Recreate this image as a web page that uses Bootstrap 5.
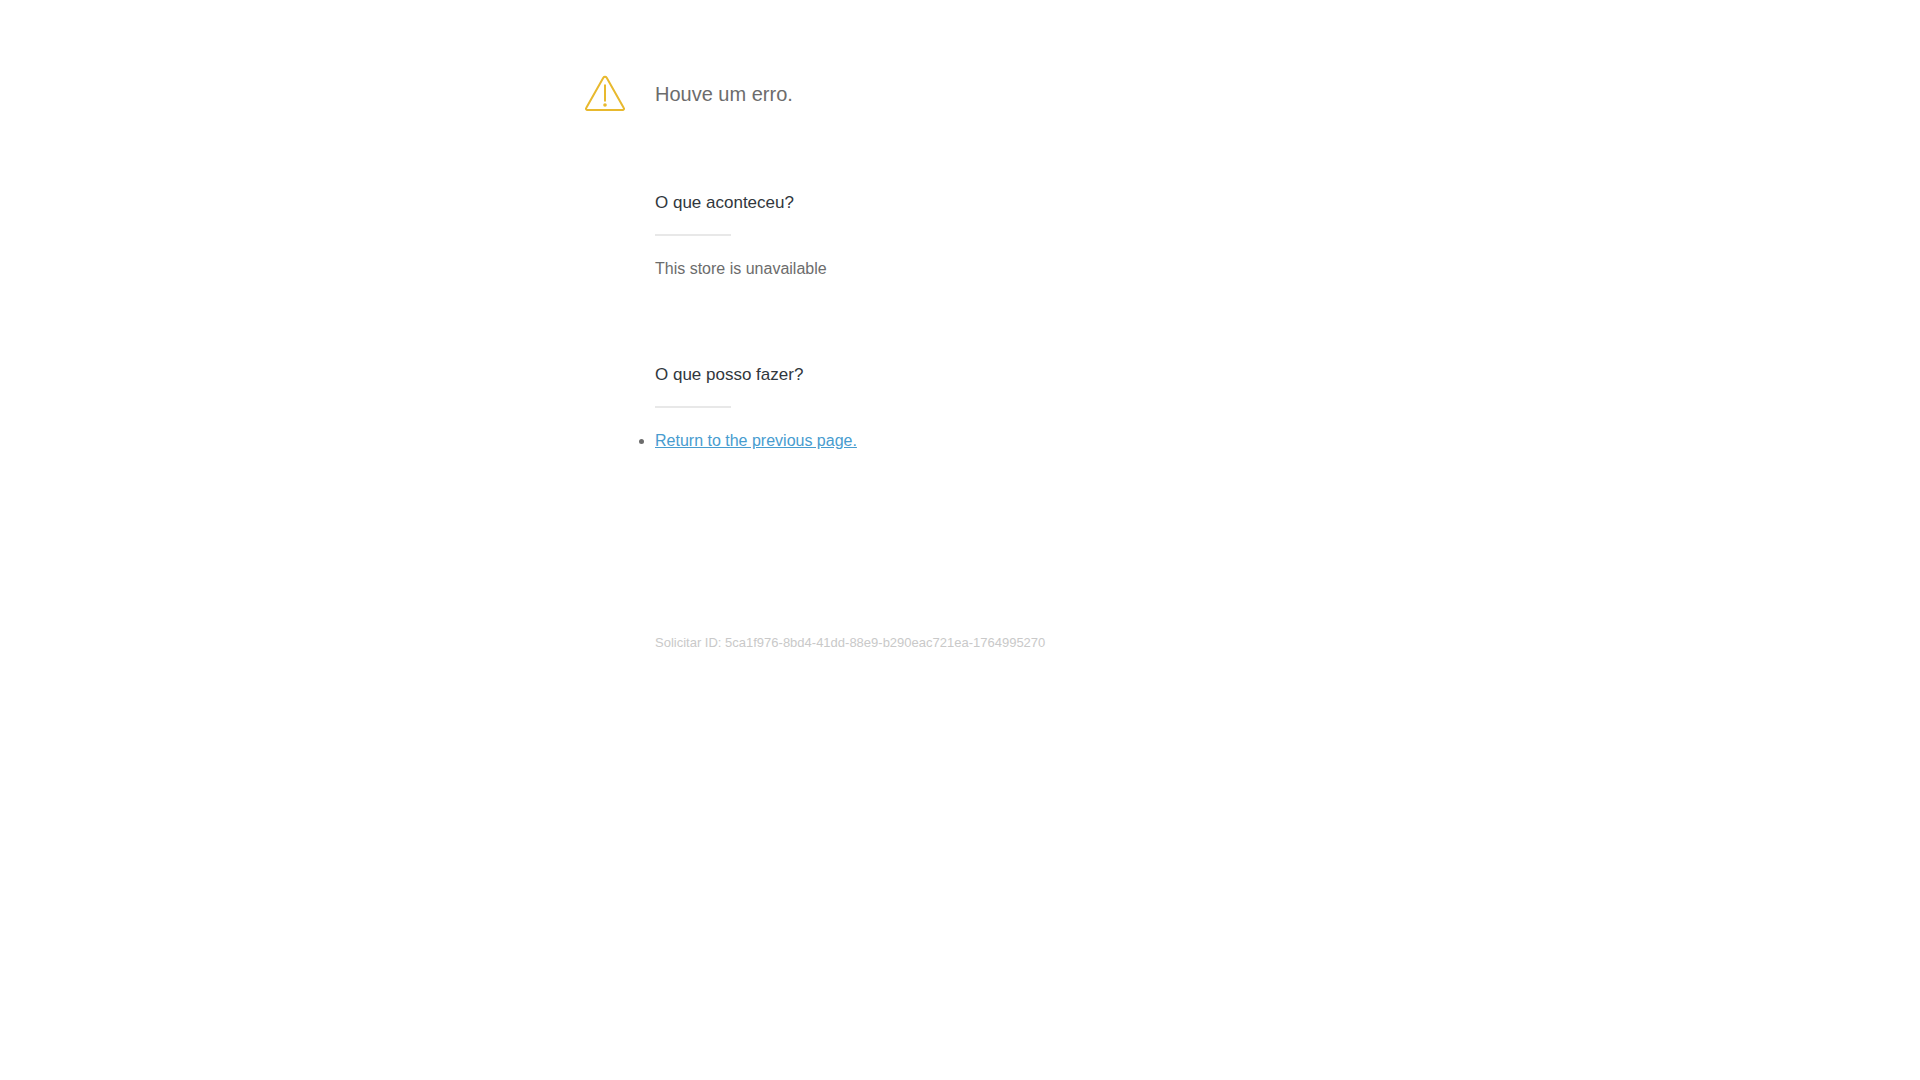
<!DOCTYPE html>
<html lang="pt">
<head>
<meta charset="utf-8">
<meta name="viewport" content="width=device-width, initial-scale=1">
<title>Houve um erro.</title>
<link href="https://cdn.jsdelivr.net/npm/bootstrap@5.3.0/dist/css/bootstrap.min.css" rel="stylesheet">
<style>
body { font-family: "Liberation Sans", Arial, sans-serif; font-size: 16px; line-height: 24px; color: #6c6c6c; background: #fff; text-rendering: optimizeSpeed; }
.error-page { max-width: 750px; padding-top: 72px; }
.error-title { font-size: 20px; line-height: 44px; margin-left: 30px; font-weight: 400; }
.error-content { padding: 75px 0 0 70px; }
.error-section + .error-section { padding-top: 82px; }
.error-section h2 { font-size: 17px; line-height: 24px; font-weight: 400; color: #31373d; }
.short-rule { width: 76px; height: 2px; margin: 19px 0 21px; background: #e8e8e8; }
.error-section a { color: #479ccf; }
.request-id { font-size: 13px; line-height: 20px; color: #c9c9c9; padding-top: 180px; }
</style>
</head>
<body>
<main class="error-page mx-auto">
  <header class="d-flex align-items-center">
    <svg class="flex-shrink-0" width="40" height="40" viewBox="0 0 40 40" fill="none" stroke="#e8b92e" stroke-width="2" aria-hidden="true">
      <path d="M18.300 3.800a2 2 0 0 1 3.400 0L38.800 34a1.300 1.300 0 0 1-1.100 2H2.300a1.300 1.300 0 0 1-1.100-2Z" stroke-linejoin="round"/>
      <path d="M20 10.500v17"/>
      <circle cx="20" cy="31" r="1.800" fill="#e8b92e" stroke="none"/>
    </svg>
    <h1 class="error-title mb-0">Houve um erro.</h1>
  </header>
  <div class="error-content">
    <section class="error-section">
      <h2 class="mb-0">O que aconteceu?</h2>
      <div class="short-rule"></div>
      <p class="mb-0">This store is unavailable</p>
    </section>
    <section class="error-section">
      <h2 class="mb-0">O que posso fazer?</h2>
      <div class="short-rule"></div>
      <ul class="mb-0 ps-0">
        <li><a href="#">Return to the previous page.</a></li>
      </ul>
    </section>
    <p class="request-id mb-0">Solicitar ID: 5ca1f976-8bd4-41dd-88e9-b290eac721ea-1764995270</p>
  </div>
</main>
<script src="https://cdn.jsdelivr.net/npm/bootstrap@5.3.0/dist/js/bootstrap.bundle.min.js"></script>
</body>
</html>
